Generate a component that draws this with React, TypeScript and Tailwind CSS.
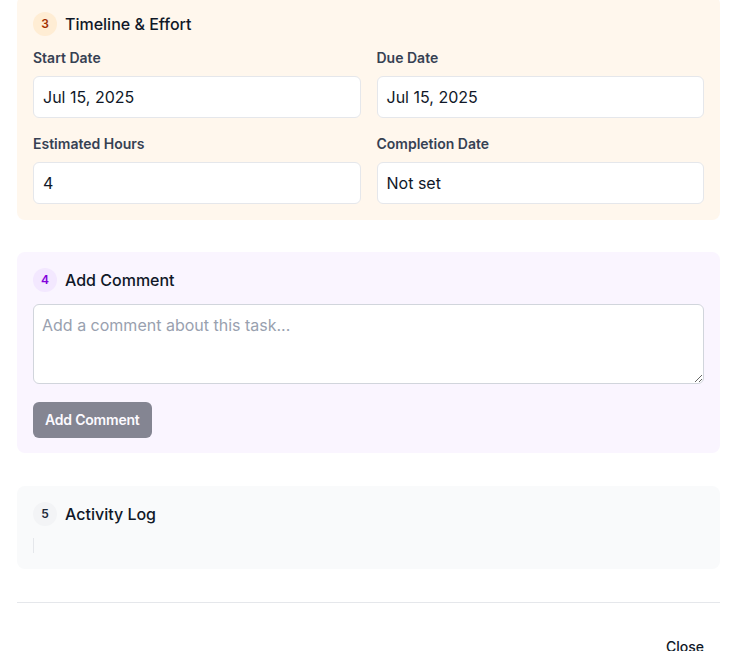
import React from "react";

const Field: React.FC<{ label: string; value: string }> = ({ label, value }) => (
  <div>
    <label className="mb-2 block text-sm font-semibold leading-5 text-gray-700">{label}</label>
    <div className="rounded-md border border-gray-200 bg-white px-[9px] py-2 text-base leading-6 text-gray-900">
      {value}
    </div>
  </div>
);

const SectionHeader: React.FC<{ n: number; title: string; badge: string }> = ({ n, title, badge }) => (
  <div className="mb-3 flex items-center gap-2">
    <span className={`flex h-6 w-6 items-center justify-center rounded-full text-xs font-semibold ${badge}`}>
      {n}
    </span>
    <h3 className="text-base font-medium text-gray-900">{title}</h3>
  </div>
);

export default function App() {
  return (
    <div
      className="min-h-screen bg-white"
      style={{ fontFamily: "Inter, 'Liberation Sans', sans-serif" }}
    >
      <div className="-mt-1 ml-[17px] w-[703px]">
        {/* Timeline & Effort */}
        <section className="rounded-lg bg-orange-50 p-4">
          <SectionHeader n={3} title="Timeline & Effort" badge="bg-orange-100 text-orange-800" />
          <div className="grid grid-cols-2 gap-x-4 gap-y-4">
            <Field label="Start Date" value="Jul 15, 2025" />
            <Field label="Due Date" value="Jul 15, 2025" />
            <Field label="Estimated Hours" value="4" />
            <Field label="Completion Date" value="Not set" />
          </div>
        </section>

        {/* Add Comment */}
        <section className="mt-8 rounded-lg bg-purple-50 px-4 pb-[15px] pt-4">
          <SectionHeader n={4} title="Add Comment" badge="bg-purple-100 text-purple-700" />
          <textarea
            placeholder="Add a comment about this task..."
            className="block h-20 w-full rounded-md border border-gray-300 bg-white p-2 text-base leading-6 text-gray-900 placeholder-gray-400 focus:outline-none"
          />
          <button
            disabled
            className="mt-[18px] rounded-md bg-gray-900 px-3 py-2 text-sm font-semibold leading-5 tracking-[-0.2px] text-white opacity-50"
          >
            Add Comment
          </button>
        </section>

        {/* Activity Log */}
        <section className="mt-[33px] rounded-lg bg-gray-50 p-4">
          <SectionHeader n={5} title="Activity Log" badge="bg-gray-100 text-gray-800" />
          <div className="h-[15px] border-l border-gray-200" />
        </section>

        <div className="mt-[33px] flex justify-end border-t border-gray-200 pt-[26px]">
          <button className="px-4 py-2 text-sm font-medium leading-5 text-gray-900">Close</button>
        </div>
      </div>
    </div>
  );
}
